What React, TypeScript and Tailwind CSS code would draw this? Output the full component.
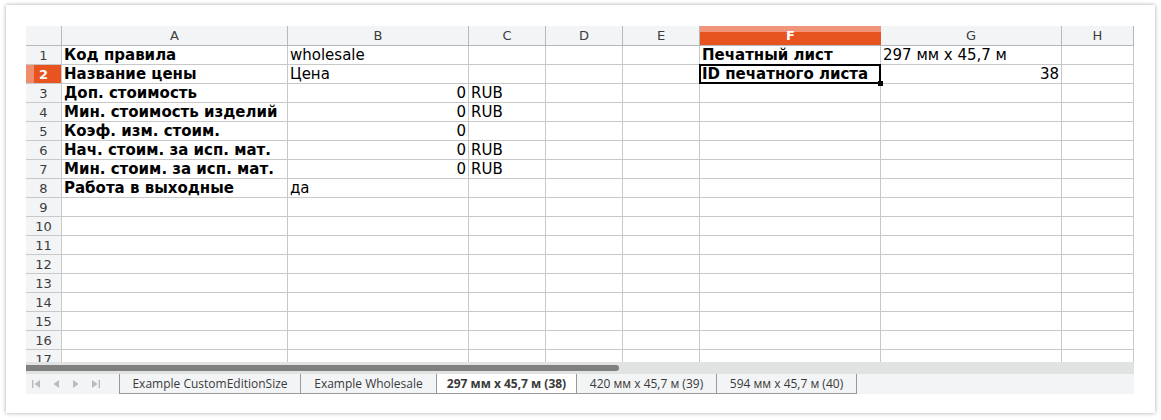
import React from "react";

type Cell = { text: string; bold?: boolean; right?: boolean };
type Row = Record<string, Cell>;

const COLS = ["A", "B", "C", "D", "E", "F", "G", "H"];

const rows: Row[] = [
  { A: { text: "Код правила", bold: true }, B: { text: "wholesale" }, F: { text: "Печатный лист", bold: true }, G: { text: "297 мм x 45,7 м" } },
  { A: { text: "Название цены", bold: true }, B: { text: "Цена" }, F: { text: "ID печатного листа", bold: true }, G: { text: "38", right: true } },
  { A: { text: "Доп. стоимость", bold: true }, B: { text: "0", right: true }, C: { text: "RUB" } },
  { A: { text: "Мин. стоимость изделий", bold: true }, B: { text: "0", right: true }, C: { text: "RUB" } },
  { A: { text: "Коэф. изм. стоим.", bold: true }, B: { text: "0", right: true } },
  { A: { text: "Нач. стоим. за исп. мат.", bold: true }, B: { text: "0", right: true }, C: { text: "RUB" } },
  { A: { text: "Мин. стоим. за исп. мат.", bold: true }, B: { text: "0", right: true }, C: { text: "RUB" } },
  { A: { text: "Работа в выходные", bold: true }, B: { text: "да" } },
];

const tabs = [
  { label: "Example CustomEditionSize", w: "w-[182px]" },
  { label: "Example Wholesale", w: "w-[136px]" },
  { label: "297 мм x 45,7 м (38)", w: "w-[140px]", active: true },
  { label: "420 мм x 45,7 м (39)", w: "w-[140px]" },
  { label: "594 мм x 45,7 м (40)", w: "w-[140px]" },
];

function NavArrow({ kind }: { kind: "first" | "prev" | "next" | "last" }) {
  return (
    <svg width="10" height="10" viewBox="0 0 10 10" className="text-[#b9bcbf]">
      {kind === "first" && (
        <>
          <rect x="1" y="1" width="1.4" height="8" fill="currentColor" />
          <path d="M9 1 L3.5 5 L9 9 Z" fill="currentColor" />
        </>
      )}
      {kind === "prev" && <path d="M8 1 L2.5 5 L8 9 Z" fill="currentColor" />}
      {kind === "next" && <path d="M2 1 L7.5 5 L2 9 Z" fill="currentColor" />}
      {kind === "last" && (
        <>
          <path d="M1 1 L6.5 5 L1 9 Z" fill="currentColor" />
          <rect x="7.6" y="1" width="1.4" height="8" fill="currentColor" />
        </>
      )}
    </svg>
  );
}

export default function App() {
  const totalRows = 17;
  return (
    <div className="w-[1161px] h-[420px] bg-white overflow-hidden">
      <div className="mt-[5px] ml-[6px] w-[1149px] h-[408px] bg-white shadow-[0_0_4px_rgba(0,0,0,0.35)] pt-[21px] pl-[20px]">
        {/* sheet grid */}
        <div className="w-[1108px] h-[336px] overflow-hidden font-['DejaVu_Sans',sans-serif]">
          <div className="grid grid-cols-[36px_226px_181px_77px_77px_77px_181px_181px_72px] grid-rows-[20px] auto-rows-[19px]">
            {/* column headers */}
            <div className="bg-[#f3f4f5] border-r border-b border-[#b6b8ba]" />
            {COLS.map((c) =>
              c === "F" ? (
                <div
                  key={c}
                  className="relative flex items-end justify-center pb-[1px] bg-[#e8541f] border-b border-[#b6b8ba] text-white font-bold text-[13px] leading-[16px]"
                >
                  <div className="absolute left-0 right-0 top-0 h-[6px] bg-[#f0957a]" />
                  <span className="relative">{c}</span>
                </div>
              ) : (
                <div
                  key={c}
                  className="flex items-end justify-center pb-[1px] bg-[#f3f4f5] border-r border-b border-[#b6b8ba] text-[#3c3c3c] text-[13px] leading-[16px]"
                >
                  {c}
                </div>
              )
            )}

            {Array.from({ length: totalRows }, (_, i) => {
              const r = rows[i] || {};
              const n = i + 1;
              const selected = n === 2;
              return (
                <React.Fragment key={n}>
                  {selected ? (
                    <div className="relative flex items-center justify-center pt-[1px] bg-[#e8541f] border-r border-b border-[#c8c8c8] text-white font-bold text-[13px]">
                      <div className="absolute left-0 top-0 bottom-0 w-[8px] bg-[#ef8e6e]" />
                      <span className="relative">{n}</span>
                    </div>
                  ) : (
                    <div className="flex items-center justify-center pt-[1px] bg-[#f3f4f5] border-r border-b border-[#c8c8c8] text-[#3c3c3c] text-[13px]">
                      {n}
                    </div>
                  )}
                  {COLS.map((c) => {
                    const cell = r[c];
                    const active = selected && c === "F";
                    return (
                      <div
                        key={c}
                        className={
                          "relative flex items-center px-[2px] border-r border-b border-[#c8c8c8] text-[15px] leading-[18px] text-black whitespace-nowrap " +
                          (cell?.right ? "justify-end" : "justify-start") +
                          (cell?.bold ? " font-bold" : "") +
                          (active ? " z-10" : "")
                        }
                      >
                        {cell ? <span>{cell.text}</span> : null}
                        {active && (
                          <>
                            <div className="absolute left-[-1px] top-[-1px] right-[-1px] bottom-[-1px] border-2 border-black" />
                            <div className="absolute right-[-3px] bottom-[-3px] w-[5px] h-[5px] bg-black" />
                          </>
                        )}
                      </div>
                    );
                  })}
                </React.Fragment>
              );
            })}
          </div>
        </div>

        {/* horizontal scrollbar */}
        <div className="w-[1108px] h-[12px] bg-[#e1e3e2] pt-[3px]">
          <div className="w-[593px] h-[6px] bg-[#7f7f7f] rounded-r-[3px]" />
        </div>

        {/* sheet tabs */}
        <div className="w-[1108px] h-[20px] bg-[#f3f4f6] flex items-stretch font-['Open_Sans',sans-serif]">
          <div className="w-[93px] flex items-center gap-[10px] pl-[5px]">
            <NavArrow kind="first" />
            <NavArrow kind="prev" />
            <NavArrow kind="next" />
            <NavArrow kind="last" />
          </div>
          {tabs.map((t, i) => (
            <div
              key={t.label}
              className={
                t.w +
                " flex items-center justify-center border-b border-r border-[#9a9a9a] text-[12px] text-[#3a3a3a] " +
                (i === 0 ? "border-l " : "") +
                (t.active ? "bg-white font-bold" : "bg-[#f3f4f6]")
              }
            >
              {t.label}
            </div>
          ))}
        </div>
      </div>
    </div>
  );
}
